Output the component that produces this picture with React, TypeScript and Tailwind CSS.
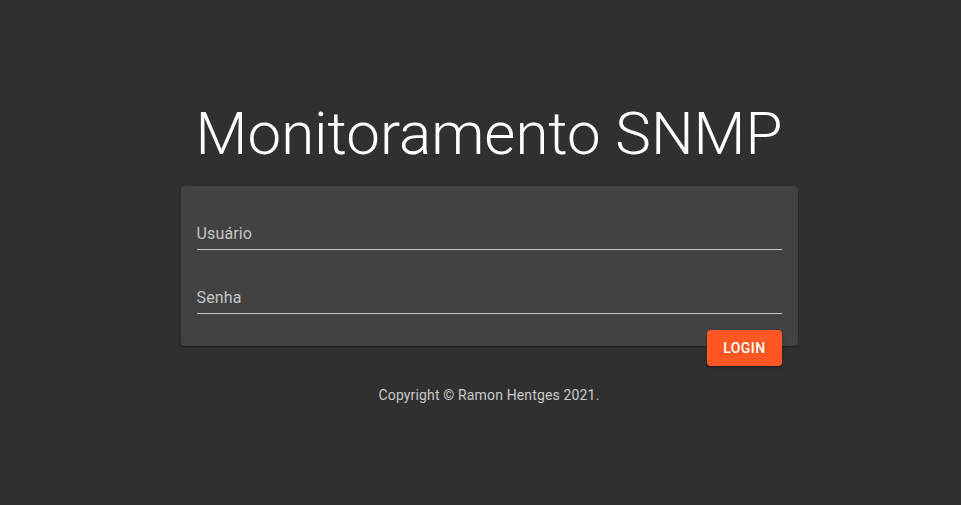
import React from 'react';

const fields = [
  { label: "Usuário", gap: "mt-[22px]" },
  { label: "Senha", gap: "mt-[38px]" },
];

export default function App() {
  return (
    <div className="min-h-[505px] bg-[#303030] font-['Roboto',sans-serif] pl-[17px]">
      <div className="flex flex-col items-center pt-[98px]">
        <h1 className="text-[60px] leading-[72px] font-light text-white">Monitoramento SNMP</h1>

        <div className="mt-[16px] w-[617px] rounded bg-[#424242] px-4 pt-4 shadow-[0_2px_1px_-1px_rgba(0,0,0,0.2),0_1px_1px_0_rgba(0,0,0,0.14),0_1px_3px_0_rgba(0,0,0,0.12)]">
          <form className="flex flex-col">
            {fields.map((f) => (
              <div key={f.label} className={`${f.gap} border-b border-white/70 pb-[6px]`}>
                <span className="block text-[16px] leading-[19px] tracking-[0.15px] text-white/70">{f.label}</span>
              </div>
            ))}
            <div className="mt-[16px] -mb-[20px] flex justify-end">
              <button
                type="button"
                className="h-[36px] rounded bg-[#ff5722] px-4 text-[14px] font-medium uppercase tracking-[0.4px] text-white shadow-[0_3px_1px_-2px_rgba(0,0,0,0.2),0_2px_2px_0_rgba(0,0,0,0.14),0_1px_5px_0_rgba(0,0,0,0.12)]"
              >
                Login
              </button>
            </div>
          </form>
        </div>

        <p className="mt-[39px] text-[14px] leading-[20px] tracking-[0.15px] text-white/75">Copyright © Ramon Hentges 2021.</p>
      </div>
    </div>
  );
}
